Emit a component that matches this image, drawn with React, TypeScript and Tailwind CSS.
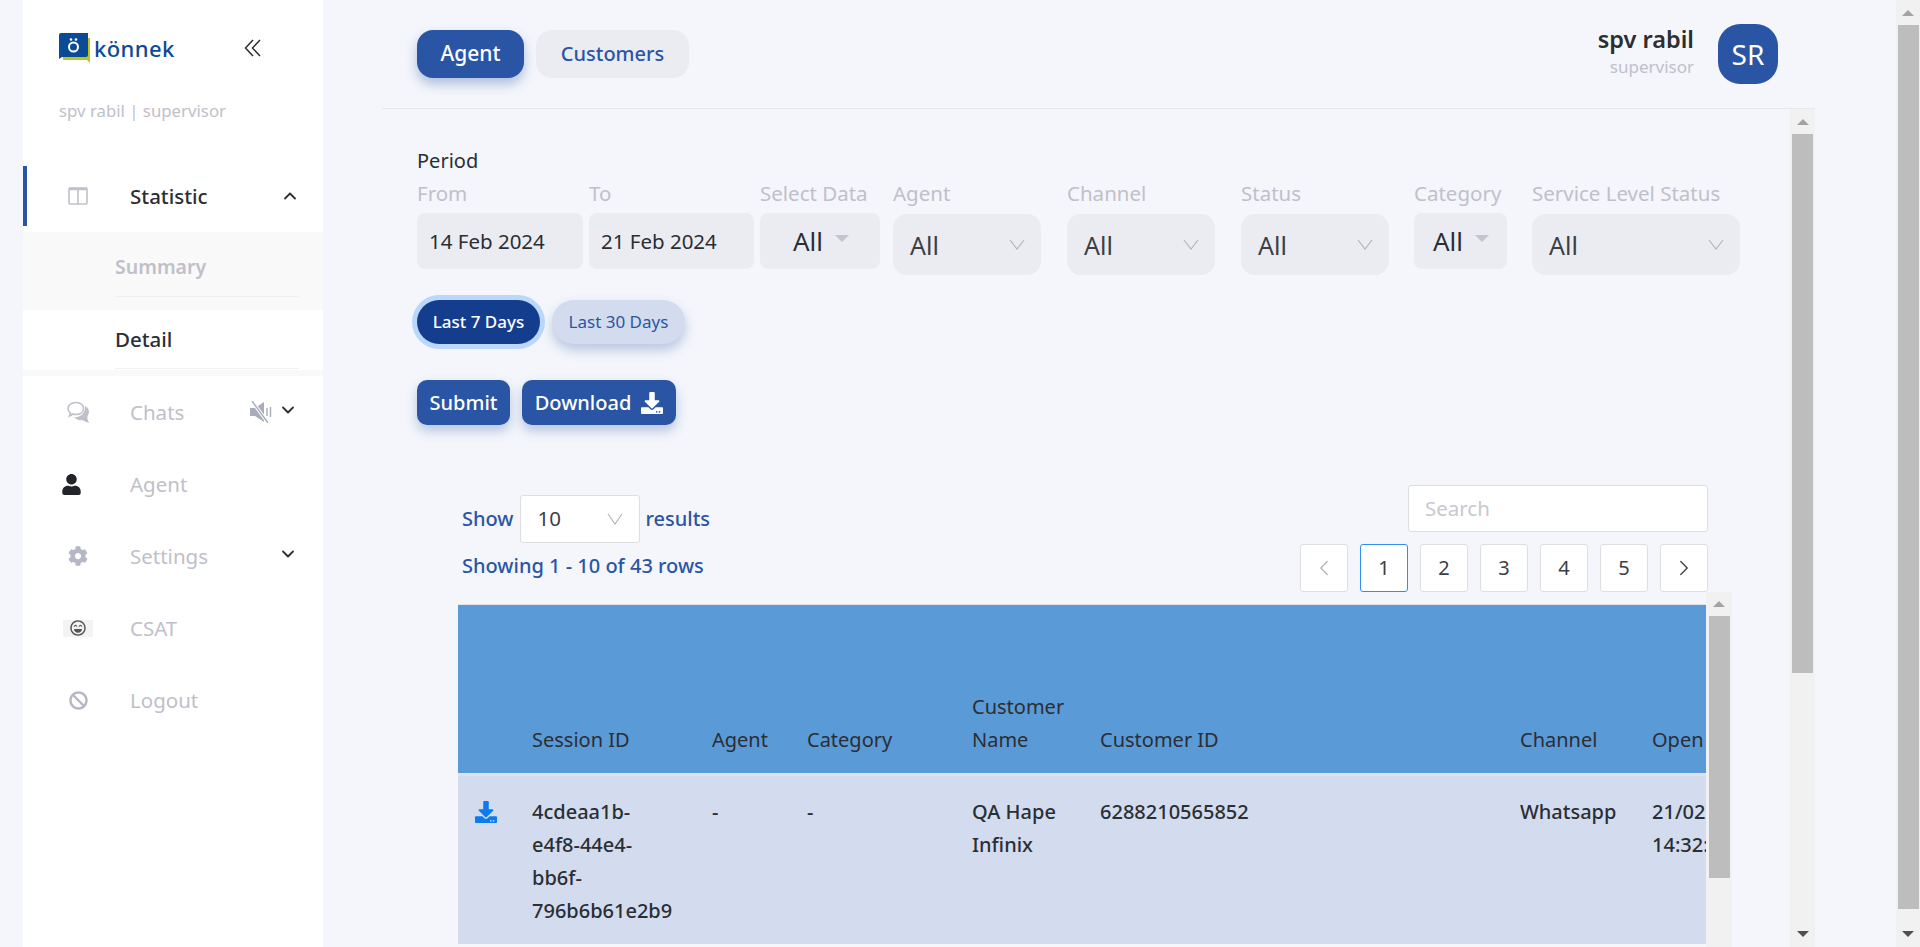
import React from 'react';
import { FaDownload, FaUser, FaCog, FaBan, FaRegLaughBeam } from 'react-icons/fa';
import { ChevronDown, ChevronUp, ChevronLeft, ChevronRight } from 'lucide-react';

const font = "font-['Noto_Sans','Open_Sans',sans-serif]";

// grey scrollbar drawn by hand, thumb size is given by the caller
function Scrollbar({ thumbTop, thumbHeight, width, bottomArrow = true }: { thumbTop: number; thumbHeight: number; width: string; bottomArrow?: boolean }) {
  return (
    <div className={`${width} h-full bg-[#f1f1f1] flex flex-col items-center shrink-0`}>
      <div className="w-full flex justify-center items-center" style={{ height: thumbTop }}>
        <div className="w-0 h-0 border-x-[6px] border-x-transparent border-b-[6px] border-b-[#a3a3a3]" />
      </div>
      <div className="w-[21px] bg-[#bdbdbd]" style={{ height: thumbHeight }} />
      <div className="flex-1" />
      {bottomArrow && <div className="w-0 h-0 mb-[10px] border-x-[6px] border-x-transparent border-t-[6px] border-t-[#505050]" />}
    </div>
  );
}

function Caret() {
  return <span className="inline-block w-0 h-0 border-x-[7px] border-x-transparent border-t-[7px] border-t-[#c4c4cc]" />;
}

function FieldLabel({ children }: { children: React.ReactNode }) {
  return <div className="h-[40px] text-[20.5px] leading-[40px] text-[#c0c0ca] whitespace-nowrap">{children}</div>;
}

function NativeSelect({ label, width, gap }: { label: string; width: string; gap: string }) {
  return (
    <div className={`${width} ${gap} shrink-0`}>
      <FieldLabel>{label}</FieldLabel>
      <div className="h-[61px] mt-px rounded-[14px] bg-[#ebecf1] flex items-center justify-between pl-[17px] pr-[16px]">
        <span className="text-[25px] text-[#3b3f45] pt-[3px]">All</span>
        <svg width="16" height="11" viewBox="0 0 16 11" fill="none" stroke="#b5b5b5" strokeWidth="1.2"><path d="M1 1 L8 10 L15 1" /></svg>
      </div>
    </div>
  );
}

function CaretSelect({ label, width, gap, px }: { label: string; width: string; gap: string; px: string }) {
  return (
    <div className={`${width} ${gap} shrink-0`}>
      <FieldLabel>{label}</FieldLabel>
      <div className={`h-[56px] rounded-[8px] bg-[#ebecf1] flex items-center gap-3 ${px}`}>
        <span className="text-[26px] text-[#2b2e33]">All</span>
        <span className="mb-[6px] flex"><Caret /></span>
      </div>
    </div>
  );
}

function DateBox({ label, value, width, gap }: { label: string; value: string; width: string; gap: string }) {
  return (
    <div className={`${width} ${gap} shrink-0`}>
      <FieldLabel>{label}</FieldLabel>
      <div className="h-[56px] rounded-[8px] bg-[#ebecf1] flex items-center pl-3 text-[20.5px] text-[#2b2e33]">{value}</div>
    </div>
  );
}

function MenuRow({ icon, label, right }: { icon: React.ReactNode; label: string; right?: React.ReactNode }) {
  return (
    <div className="h-[72px] flex items-center">
      <div className="w-[107px] pl-[40px] flex items-center"><div className="w-[30px] flex justify-center">{icon}</div></div>
      <span className="text-[20.5px] text-[#c0c0ca]">{label}</span>
      <div className="ml-auto pr-[25px] flex items-center">{right}</div>
    </div>
  );
}

function PageBtn({ children, active }: { children: React.ReactNode; active?: boolean }) {
  return (
    <div className={`w-[48px] h-[48px] bg-white border rounded-[3px] flex items-center justify-center text-[20px] text-[#3b3f45] ${active ? 'border-[#2f8ff0]' : 'border-[#dcdee2]'}`}>
      {children}
    </div>
  );
}

const headers = [
  { label: 'Session ID', w: 'w-[180px]' },
  { label: 'Agent', w: 'w-[95px]' },
  { label: 'Category', w: 'w-[165px]' },
  { label: 'Customer Name', w: 'w-[128px]' },
  { label: 'Customer ID', w: 'w-[420px]' },
  { label: 'Channel', w: 'w-[132px]' },
];

export default function App() {
  return (
    <div className={`${font} w-[1920px] h-[947px] flex overflow-hidden bg-[#f4f6fb] text-[#2b2e33]`}>
      {/* Sidebar */}
      <aside className="ml-[23px] w-[300px] h-full bg-white shrink-0 flex flex-col">
        <div className="h-[166px] pl-[36px]">
          <div className="h-[96px] flex items-center pr-[62px]">
            <div className="flex items-center">
              <svg width="32" height="32" viewBox="0 0 32 32">
                <path d="M4 6 H31 V31 L28 28 H4 Z" fill="#b9c61c" />
                <path d="M2 1 Q0 1 0 3 V27 L3 25 H27 Q29 25 29 23 V1 Z" fill="#0b4a95" />
                <circle cx="14.5" cy="15" r="4.5" fill="none" stroke="#fff" strokeWidth="2" />
                <circle cx="12" cy="7.5" r="1.3" fill="#fff" />
                <circle cx="17" cy="7.5" r="1.3" fill="#fff" />
              </svg>
              <span className="ml-[3px] text-[22px] font-medium tracking-[0.4px] text-[#0b4a95] leading-none">könnek</span>
            </div>
            <svg className="ml-auto" width="17" height="18" viewBox="0 0 17 18" fill="none" stroke="#2b2e33" strokeWidth="1.5"><path d="M9 1 L1.5 9 L9 17 M16 1 L8.5 9 L16 17" /></svg>
          </div>
          <div className="text-[16.8px] text-[#c0c0ca] mt-[2px]">spv rabil | supervisor</div>
        </div>

        <div className="h-[60px] border-l-4 border-[#2a55a5] flex items-center">
          <div className="w-[103px] pl-[36px]">
            <div className="w-[30px] flex justify-center">
              <svg width="20" height="18" viewBox="0 0 20 18" fill="none" stroke="#c0c0ca" strokeWidth="1.6"><rect x="1" y="1" width="18" height="16" rx="1" /><path d="M10 1V17" /><path d="M1 2H19" strokeWidth="2.4" /></svg>
            </div>
          </div>
          <span className="text-[20.5px] font-medium">Statistic</span>
          <ChevronUp className="ml-auto mr-[23px]" size={20} strokeWidth={2.2} />
        </div>

        <div className="mt-[6px] h-[78px] bg-[#f9f9f9] pl-[92px] pr-[24px]">
          <div className="h-[65px] border-b border-[#f0f0f0] text-[19.5px] font-semibold text-[#c0c0ca] flex items-center pt-[6px]">Summary</div>
        </div>
        <div className="h-[60px] pl-[92px] pr-[24px]">
          <div className="h-[59px] border-b border-[#f0f0f0] text-[20.5px] font-medium flex items-center">Detail</div>
        </div>
        <div className="h-[6px] bg-[#f9f9f9]" />

        <MenuRow
          icon={
            <svg width="23" height="23" viewBox="0 0 23 23">
              <path d="M9 1.5 C13.5 1.5 16.5 4 16.5 7.5 C16.5 11 13.5 13.5 9 13.5 C8 13.5 7 13.4 6 13 L2.5 15 L3.5 12 C2 11 1 9.5 1 7.5 C1 4 4.5 1.5 9 1.5 Z" fill="none" stroke="#c0c0ca" strokeWidth="1.6" />
              <path d="M18 5 C22 7 23 11 21 14 C20 16 20 18 22 22 C19 21 17 20 15 19 C12 19.5 9 18.5 7 16 C13 17 19 12 18 5 Z" fill="#c0c0ca" />
            </svg>
          }
          label="Chats"
          right={<>
            <svg className="mr-[6px]" width="22" height="22" viewBox="0 0 22 22">
              <path d="M0 7 H5 L14 1 V21 L5 15 H0 Z" fill="#a9acba" />
              <path d="M17 7 V15 M20.5 6 V16" stroke="#a9acba" strokeWidth="1.4" />
              <path d="M2 0 L18 22" stroke="#fff" strokeWidth="3.4" />
              <path d="M2 0 L18 22" stroke="#a9acba" strokeWidth="1.4" />
            </svg>
            <ChevronDown className="-mt-[4px]" size={20} strokeWidth={2.2} />
          </>}
        />
        <MenuRow icon={<FaUser className="-ml-[14px]" size={21} color="#212529" />} label="Agent" />
        <MenuRow icon={<FaCog size={20} color="#b5b7c4" />} label="Settings" right={<ChevronDown className="-mt-[4px]" size={20} strokeWidth={2.2} />} />
        <MenuRow
          icon={<div className="w-[30px] h-[17px] bg-[#f3f3f3] flex items-center justify-center"><FaRegLaughBeam size={16} color="#555" /></div>}
          label="CSAT"
        />
        <MenuRow icon={<FaBan size={19} color="#b5b7c4" />} label="Logout" />
      </aside>

      {/* Main */}
      <main className="ml-[59px] w-[1433px] h-full shrink-0 flex flex-col">
        <header className="h-[109px] border-b border-[#e6e8ee] pl-[35px] pr-[37px] flex items-start shrink-0">
          <div className="mt-[30px] flex gap-3">
            <div className="w-[107px] h-[48px] rounded-[16px] bg-[#2a55a5] text-white text-[21px] font-medium flex items-center justify-center shadow-[0_6px_12px_rgba(42,85,165,0.35)]">Agent</div>
            <div className="w-[153px] h-[48px] rounded-[16px] bg-[#ebecf1] text-[#2a55a5] text-[20px] font-medium flex items-center justify-center">Customers</div>
          </div>
          <div className="ml-auto mt-[24px] flex items-start gap-[24px]">
            <div className="text-right">
              <div className="text-[23.5px] font-semibold leading-[30px] text-[#2b2e33]">spv rabil</div>
              <div className="text-[17px] leading-[26px] text-[#c0c0ca]">supervisor</div>
            </div>
            <div className="w-[60px] h-[60px] rounded-[22px] bg-[#2a55a5] text-white text-[28px] flex items-center justify-center">SR</div>
          </div>
        </header>

        <div className="flex-1 flex min-h-0">
          <div className="w-[1408px] shrink-0 pl-[35px] overflow-hidden">
            <div className="h-[40px] mt-[32px] text-[20px] text-[#2b2e33] leading-[40px]">Period</div>
            <div className="flex items-start -mt-[8px]">
              <DateBox label="From" value="14 Feb 2024" width="w-[166px]" gap="mr-[6px]" />
              <DateBox label="To" value="21 Feb 2024" width="w-[165px]" gap="mr-[6px]" />
              <CaretSelect label="Select Data" width="w-[120px]" gap="mr-[13px]" px="pl-[33px]" />
              <NativeSelect label="Agent" width="w-[148px]" gap="mr-[26px]" />
              <NativeSelect label="Channel" width="w-[148px]" gap="mr-[26px]" />
              <NativeSelect label="Status" width="w-[148px]" gap="mr-[25px]" />
              <CaretSelect label="Category" width="w-[93px]" gap="mr-[25px]" px="pl-[19px]" />
              <NativeSelect label="Service Level Status" width="w-[208px]" gap="" />
            </div>

            <div className="mt-[25px] flex gap-3">
              <div className="w-[123px] h-[44px] rounded-full bg-[#143d8e] text-white text-[17px] font-medium flex items-center justify-center shadow-[0_0_0_5px_#b9d8fb]">Last 7 Days</div>
              <div className="w-[133px] h-[44px] rounded-full bg-[#d2dcee] text-[#2a55a5] text-[17px] flex items-center justify-center shadow-[0_6px_12px_rgba(42,85,165,0.3)]">Last 30 Days</div>
            </div>

            <div className="mt-[36px] flex gap-3">
              <div className="w-[93px] h-[45px] rounded-[10px] bg-[#2a55a5] text-white text-[20px] font-medium flex items-center justify-center shadow-[0_6px_12px_rgba(42,85,165,0.3)]">Submit</div>
              <div className="w-[154px] h-[45px] rounded-[10px] bg-[#2a55a5] text-white text-[20px] font-medium flex items-center justify-center gap-[10px] shadow-[0_6px_12px_rgba(42,85,165,0.3)]">Download <FaDownload size={22} /></div>
            </div>

            {/* Table block */}
            <div className="ml-[41px] mt-[60px] w-[1274px]">
              <div className="w-[1250px] flex justify-between h-[107px]">
                <div className="pl-[4px] text-[20px] font-medium text-[#2a55a5]">
                  <div className="flex items-center gap-[6px] mt-[10px] h-[47px]">
                    <span>Show</span>
                    <div className="w-[120px] h-[48px] bg-white border border-[#dcdee2] rounded-[3px] flex items-center justify-between pl-[17px] pr-[16px] text-[20.5px] font-normal text-[#3b3f45]">
                      <span>10</span>
                      <svg width="16" height="12" viewBox="0 0 16 12" fill="none" stroke="#b5b5b5" strokeWidth="1.2"><path d="M1 1 L8 11 L15 1" /></svg>
                    </div>
                    <span>results</span>
                  </div>
                  <div className="mt-[9px] leading-[30px]">Showing 1 - 10 of 43 rows</div>
                </div>
                <div className="flex flex-col items-end">
                  <div className="w-[300px] h-[47px] bg-white border border-[#dcdee2] rounded-[3px] flex items-center pl-[16px] text-[20.5px] text-[#c8c8d0]">Search</div>
                  <div className="mt-[12px] flex gap-[12px]">
                    <PageBtn><ChevronLeft size={26} strokeWidth={1.2} color="#b5b5b5" /></PageBtn>
                    <PageBtn active>1</PageBtn>
                    <PageBtn>2</PageBtn>
                    <PageBtn>3</PageBtn>
                    <PageBtn>4</PageBtn>
                    <PageBtn>5</PageBtn>
                    <PageBtn><ChevronRight size={26} strokeWidth={1.2} color="#3b3f45" /></PageBtn>
                  </div>
                </div>
              </div>

              {/* Table + own scrollbar */}
              <div className="flex items-start h-[400px]">
                <div className="w-[1248px] mt-[12px] overflow-hidden shrink-0">
                  <div className="w-[1400px] border-t border-[#dee2e6]">
                    <div className="h-[168px] bg-[#5a9ad6] flex items-end pb-[17px] text-[20px] leading-[33px]">
                      <div className="w-[74px] shrink-0" />
                      {headers.map(h => <div key={h.label} className={`${h.w} shrink-0 pr-[10px]`}>{h.label}</div>)}
                      <div>Open</div>
                    </div>
                    <div className="h-[3px] bg-[#dee2e6]" />
                    <div className="h-[168px] bg-[#d2dcee] flex pt-[19px] text-[20px] font-medium leading-[33px]">
                      <div className="w-[74px] shrink-0 pl-[17px] pt-[6px]"><FaDownload size={22} color="#0b7bf0" /></div>
                      <div className="w-[180px] shrink-0">4cdeaa1b-<br />e4f8-44e4-<br />bb6f-<br />796b6b61e2b9</div>
                      <div className="w-[95px] shrink-0">-</div>
                      <div className="w-[165px] shrink-0">-</div>
                      <div className="w-[128px] shrink-0">QA Hape<br />Infinix</div>
                      <div className="w-[420px] shrink-0">6288210565852</div>
                      <div className="w-[132px] shrink-0">Whatsapp</div>
                      <div className="shrink-0">21/02/2024<br />14:32:10</div>
                    </div>
                  </div>
                </div>
                <Scrollbar thumbTop={24} thumbHeight={262} width="w-[26px]" bottomArrow={false} />
              </div>
            </div>
          </div>
          <Scrollbar thumbTop={25} thumbHeight={539} width="w-[25px]" />
        </div>
      </main>

      <div className="flex-1" />
      <Scrollbar thumbTop={25} thumbHeight={884} width="w-[24px]" />
    </div>
  );
}
